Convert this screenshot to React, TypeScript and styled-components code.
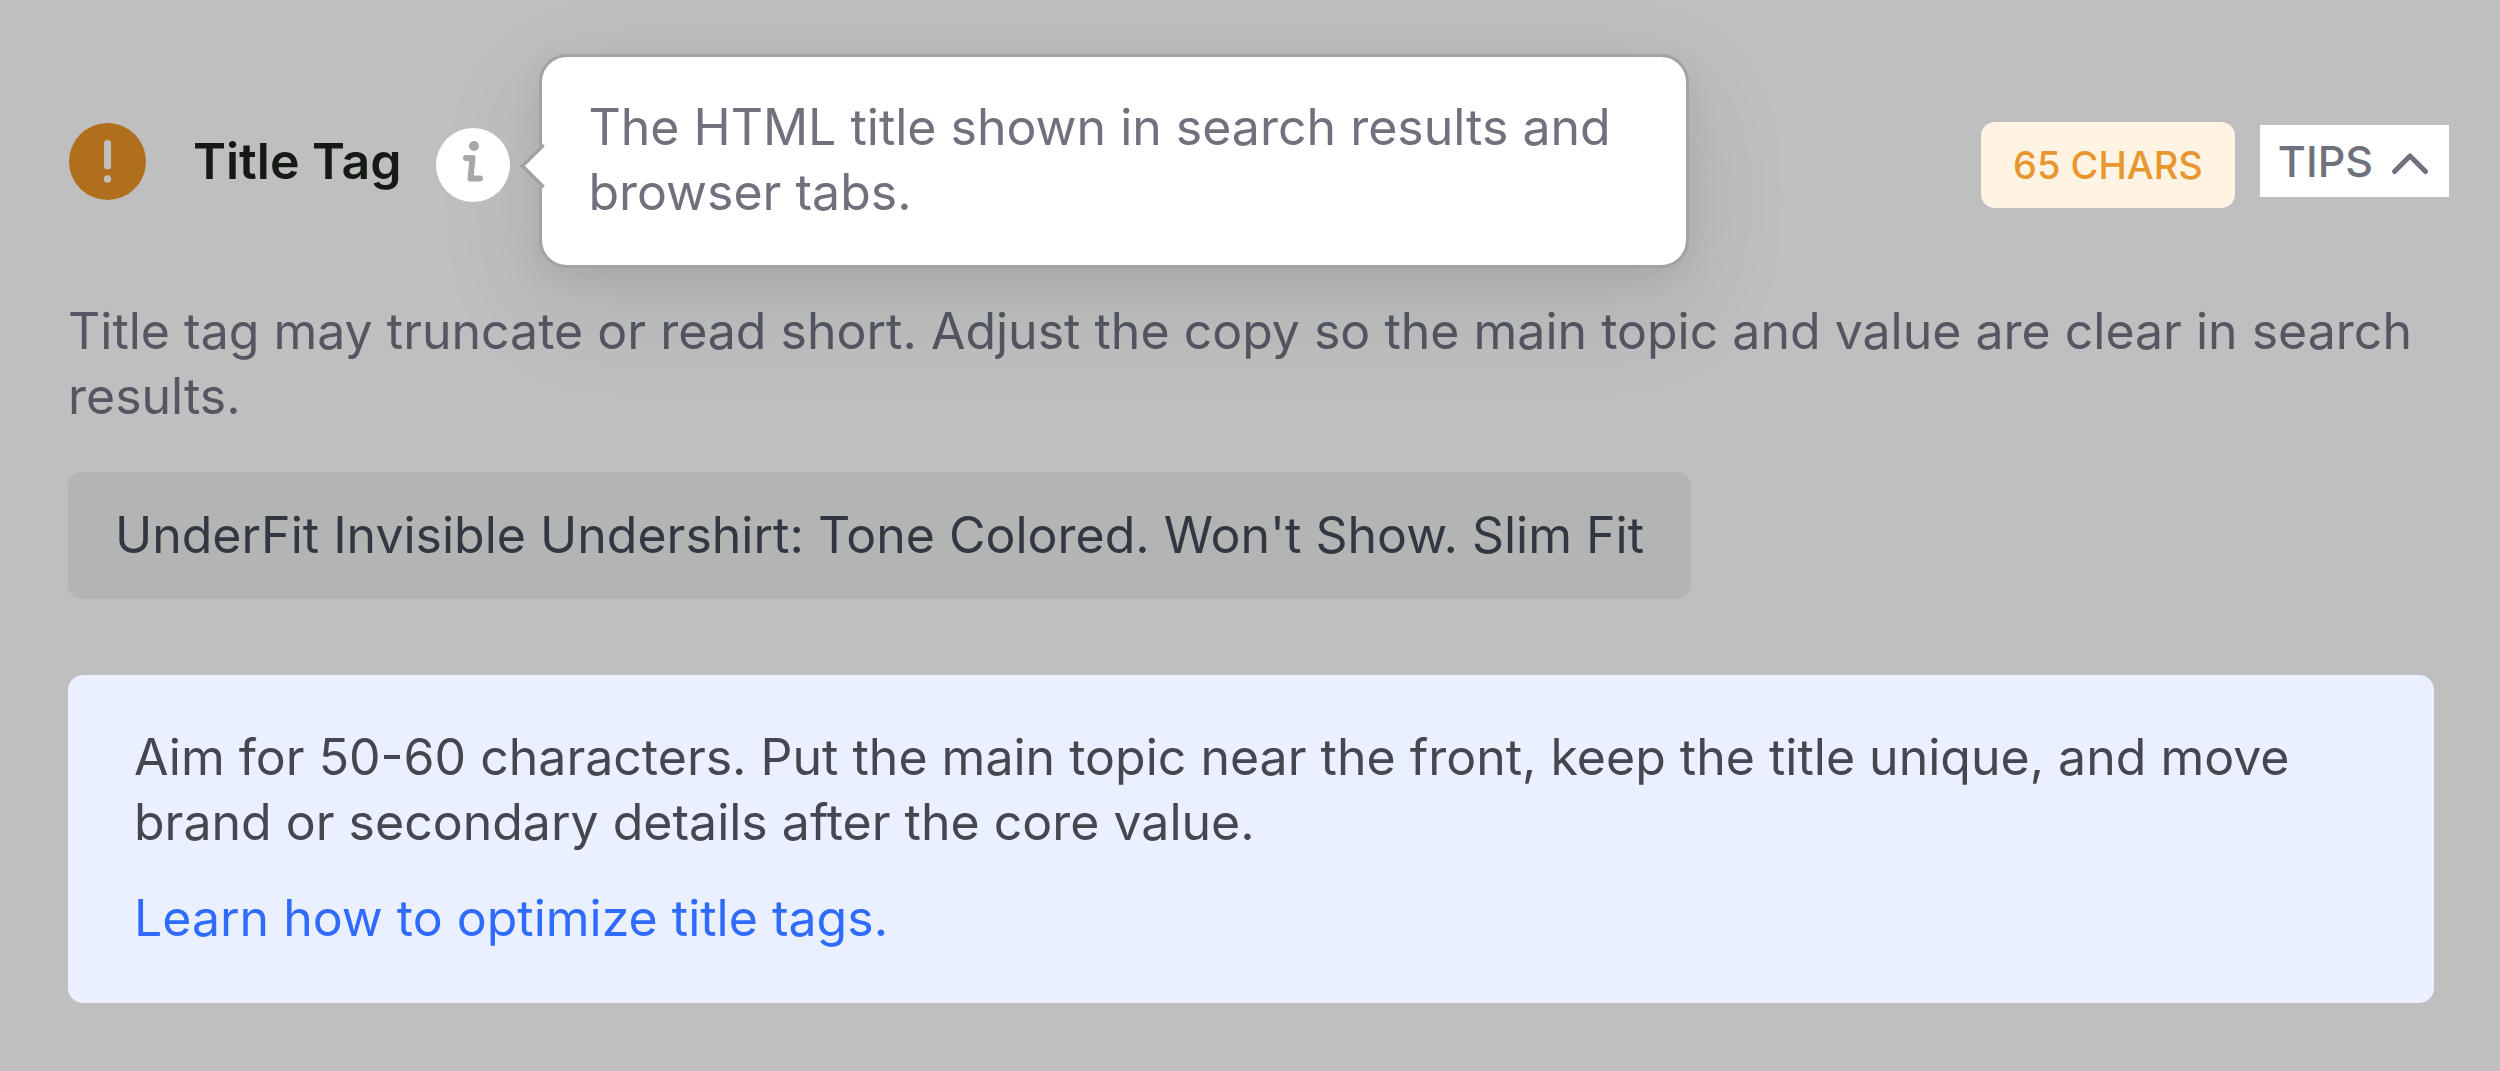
import React, { useState } from "react";
import styled, { createGlobalStyle } from "styled-components";

const GlobalStyle = createGlobalStyle`
  *, *::before, *::after { box-sizing: border-box; }
  body {
    margin: 0;
    background: #bfbfbf;
    font-family: Inter, "Liberation Sans", sans-serif;
    font-size: 50px;
    line-height: 65px;
    font-optical-sizing: none;
  }
  p, h2 { margin: 0; font-size: inherit; }
  button { font: inherit; border: 0; padding: 0; cursor: pointer; }
`;

const Card = styled.article`
  display: flex;
  flex-direction: column;
  padding: 114px 66px 68px 68px;
`;

const Header = styled.header`
  display: flex;
  align-items: center;
  justify-content: space-between;
  margin-right: -15px;
`;

const Group = styled.div<{ $gap: number }>`
  display: flex;
  align-items: center;
  gap: ${(p) => p.$gap}px;
`;

const StatusIcon = styled.svg`
  width: 78px;
  height: 78px;
  margin-right: 12px;
`;

const Title = styled.h2`
  font-weight: 600;
  line-height: 66px;
  color: #151a14;
`;

const InfoAnchor = styled.div`
  position: relative;
  display: flex;
  margin-top: 8px;
`;

const InfoButton = styled.button`
  display: flex;
  width: 74px;
  height: 74px;
  border-radius: 50%;
  background: #ffffff;
  position: relative;
  z-index: 1;
`;

const Tooltip = styled.div`
  position: absolute;
  left: 103px;
  top: -74px;
  width: 1150px;
  padding: 38px 46px 40px;
  border: 3px solid #a1a2a5;
  border-radius: 28px;
  background: #ffffff;
  color: #6f717d;
  box-shadow: 0 36px 110px rgba(20, 34, 28, 0.1), 0 10px 32px rgba(20, 34, 28, 0.08);

  &::before {
    content: "";
    position: absolute;
    left: -16px;
    top: 93px;
    width: 32px;
    height: 32px;
    background: #ffffff;
    border: solid #a1a2a5;
    border-width: 0 0 4px 4px;
    transform: rotate(45deg);
  }
`;

const Badge = styled.span`
  margin-top: 8px;
  padding: 19px 32px;
  border-radius: 14px;
  background: #fff4e4;
  color: #e8962e;
  font-size: 38px;
  line-height: 48px;
  font-weight: 500;
`;

const TipsButton = styled.button`
  display: flex;
  align-items: center;
  gap: 16px;
  height: 72px;
  padding: 0 18px;
  background: #ffffff;
  color: #6f717d;
  font-size: 43px;
  line-height: 48px;
  font-weight: 500;
`;

const Description = styled.p`
  margin-top: 91px;
  color: #545762;
`;

const CurrentValue = styled.p`
  align-self: flex-start;
  margin-top: 43px;
  padding: 31px 47px;
  border-radius: 14px;
  background: #b3b5b4;
  color: #333741;
`;

const TipsPanel = styled.section`
  display: flex;
  flex-direction: column;
  align-items: flex-start;
  gap: 31px;
  margin-top: 76px;
  padding: 50px 66px 52px;
  border-radius: 15px;
  background: #eaf0ff;
  color: #43474f;
`;

const LearnLink = styled.a`
  color: #2f6bff;
  text-decoration: none;
`;

export default function App() {
  const [open, setOpen] = useState(true);

  return (
    <>
      <GlobalStyle />
      <Card>
        <Header>
          <Group $gap={35}>
            <StatusIcon viewBox="0 0 78 78" role="img" aria-label="Warning">
              <circle cx="39.5" cy="39.5" r="38.5" fill="#b06f1c" />
              <path d="M39.5 21.5V44" stroke="#bfbfbf" strokeWidth="7" strokeLinecap="round" />
              <circle cx="39.5" cy="57" r="3.7" fill="#bfbfbf" />
            </StatusIcon>
            <Title>Title Tag</Title>
            <InfoAnchor>
              <InfoButton type="button" aria-label="About the title tag" aria-describedby="title-help">
                <svg width="74" height="74" viewBox="0 0 74 74" fill="none" aria-hidden="true">
                  <circle cx="38" cy="18" r="5" fill="#a8a8a8" />
                  <path
                    d="M30 30H36.5L34.5 50.5H44"
                    stroke="#a8a8a8"
                    strokeWidth="6"
                    strokeLinecap="round"
                    strokeLinejoin="round"
                  />
                </svg>
              </InfoButton>
              <Tooltip role="tooltip" id="title-help">
                The HTML title shown in search results and browser tabs.
              </Tooltip>
            </InfoAnchor>
          </Group>
          <Group $gap={25}>
            <Badge>65 CHARS</Badge>
            <TipsButton
              type="button"
              aria-expanded={open}
              aria-controls="title-tips"
              onClick={() => setOpen(!open)}
            >
              TIPS
              <svg width="42" height="42" viewBox="0 0 42 42" fill="none" aria-hidden="true">
                <path
                  d={open ? "M5.5 31.5L21 16L36.5 31.5" : "M5.5 16L21 31.5L36.5 16"}
                  stroke="currentColor"
                  strokeWidth="5"
                  strokeLinecap="round"
                  strokeLinejoin="round"
                />
              </svg>
            </TipsButton>
          </Group>
        </Header>
        <Description>
          Title tag may truncate or read short. Adjust the copy so the main topic and value are clear
          in search results.
        </Description>
        <CurrentValue>UnderFit Invisible Undershirt: Tone Colored. Won't Show. Slim Fit</CurrentValue>
        {open && (
          <TipsPanel id="title-tips">
            <p>
              Aim for 50-60 characters. Put the main topic near the front, keep the title unique, and
              move brand or secondary details after the core value.
            </p>
            <LearnLink href="#title-tags">Learn how to optimize title tags.</LearnLink>
          </TipsPanel>
        )}
      </Card>
    </>
  );
}
